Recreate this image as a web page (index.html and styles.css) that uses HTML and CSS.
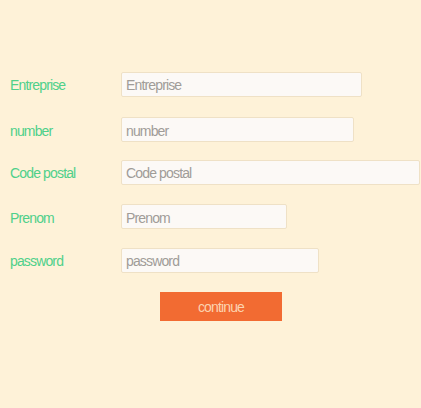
FILE: index.html
```html
<!DOCTYPE html>
<html lang="fr">
<head>
<meta charset="utf-8">
<link rel="stylesheet" href="styles.css">
</head>
<body>
<form class="form">
  <div class="row row-1">
    <label class="label" for="f1">Entreprise</label>
    <input class="field w-entreprise" id="f1" type="text" placeholder="Entreprise">
  </div>
  <div class="row row-2">
    <label class="label" for="f2">number</label>
    <input class="field w-number" id="f2" type="text" placeholder="number">
  </div>
  <div class="row row-3">
    <label class="label" for="f3">Code postal</label>
    <input class="field w-code" id="f3" type="text" placeholder="Code postal">
  </div>
  <div class="row row-4">
    <label class="label" for="f4">Prenom</label>
    <input class="field w-prenom" id="f4" type="text" placeholder="Prenom">
  </div>
  <div class="row row-5">
    <label class="label" for="f5">password</label>
    <input class="field w-password" id="f5" type="password" placeholder="password">
  </div>
  <div class="actions">
    <button class="btn" type="button">continue</button>
  </div>
</form>
</body>
</html>
```
FILE: styles.css
```css
html, body {
  margin: 0;
  padding: 0;
  background: #fef2d8;
  height: 100%;
}
body {
  font-family: "Liberation Sans Narrow", "Arial Narrow", "Liberation Sans", Arial, sans-serif;
  font-size: 14px;
  letter-spacing: -0.85px;
}
.form {
  display: flex;
  flex-direction: column;
  padding: 72px 0 0 10px;
}
.row {
  display: flex;
  align-items: center;
  height: 25px;
}
.row-2 { margin-top: 20px; }
.row-3 { margin-top: 18px; }
.row-4 { margin-top: 19px; }
.row-5 { margin-top: 19px; }
.label {
  width: 111px;
  flex: none;
  color: #4fd08a;
  padding-top: 1px;
}
.row-2 .label,
.row-4 .label { padding-top: 3px; }
.field {
  box-sizing: border-box;
  height: 25px;
  margin: 0;
  padding: 1px 4px 0;
  border: 1px solid #efe1c6;
  border-radius: 2px;
  background: #fcf9f6;
  font-family: inherit;
  font-size: 14px;
  letter-spacing: -0.85px;
  color: #555;
  outline: none;
}
.w-number,
.w-prenom { padding-top: 3px; }
.field::placeholder { color: #a09c98; }
.w-entreprise { width: 241px; }
.w-number { width: 233px; }
.w-code { width: 299px; }
.w-prenom { width: 166px; }
.w-password { width: 198px; }
.actions {
  display: flex;
  padding-left: 150px;
  margin-top: 19px;
}
.btn {
  width: 122px;
  height: 29px;
  border: none;
  border-radius: 0;
  background: #f26b32;
  color: #fcd3b0;
  font-family: inherit;
  font-size: 14px;
  letter-spacing: -0.85px;
  padding: 1px 0 0;
  cursor: pointer;
}
```
